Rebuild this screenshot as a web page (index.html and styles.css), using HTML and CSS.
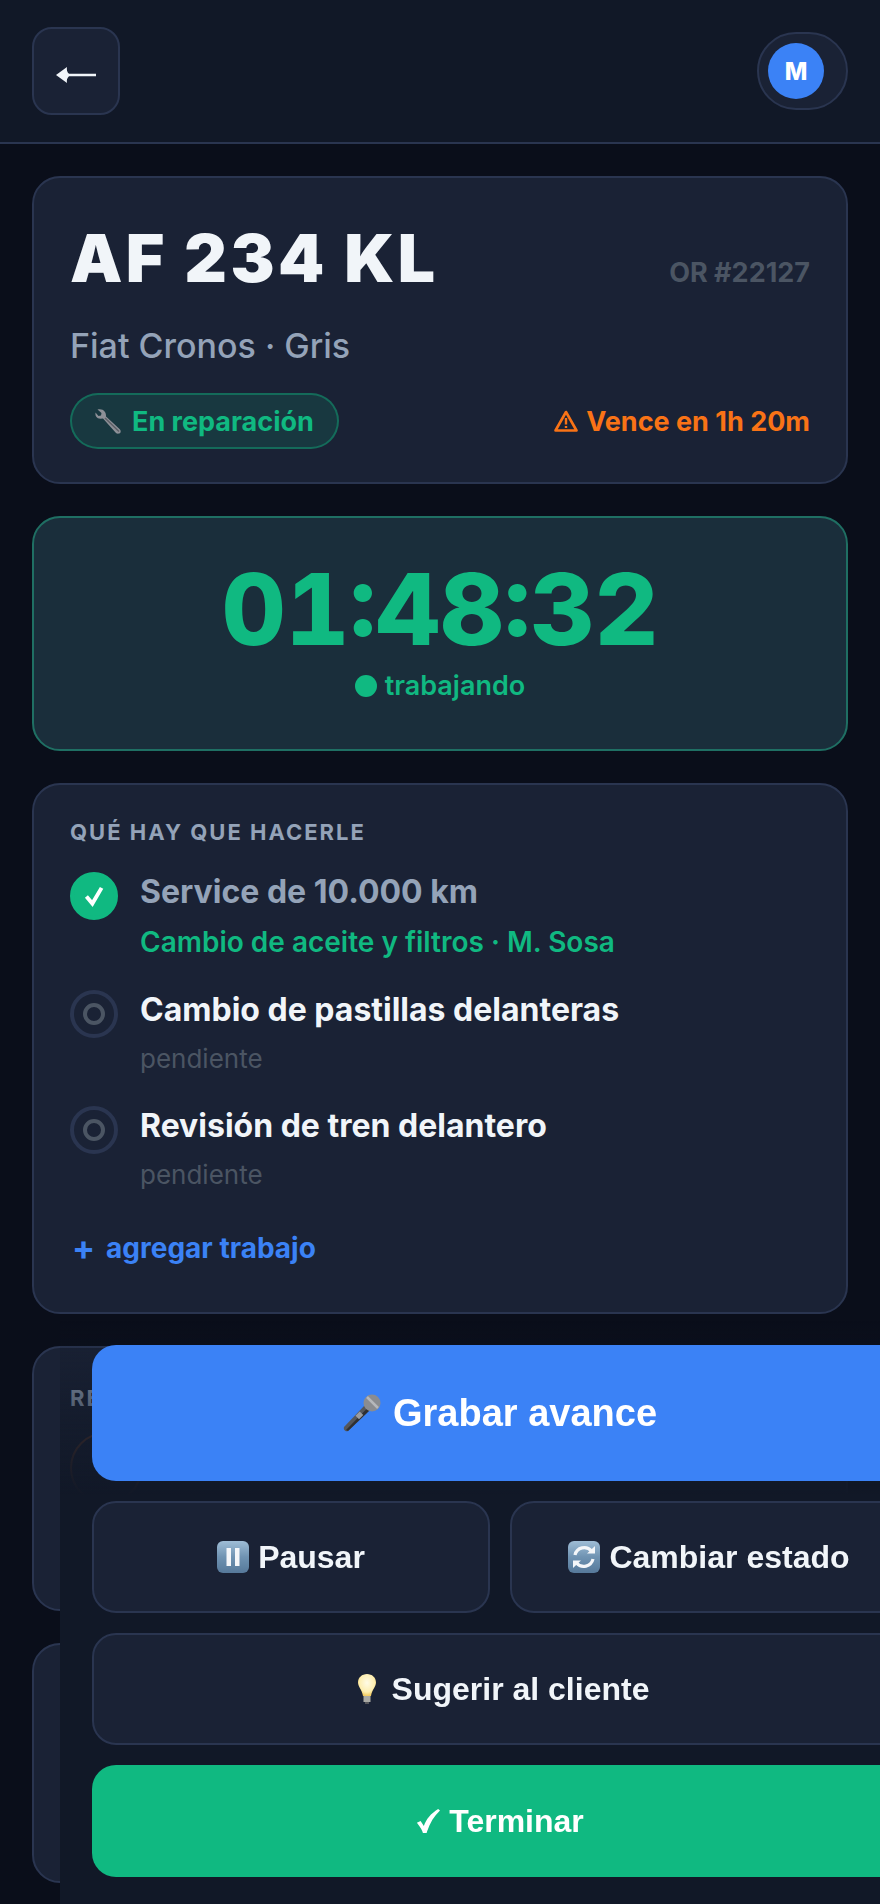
FILE: index.html
```html
<!DOCTYPE html>
<html lang="es">
<head>
<meta charset="utf-8">
<title>Orden de reparación</title>
<link rel="stylesheet" href="styles.css">
</head>
<body>
<header class="topbar">
  <button class="back" aria-label="Volver">
    <svg viewBox="0 0 40 16" width="40" height="16"><path d="M0 8L11 0C10.500 3 11 5 13 6.800H40V9.200H13C11 11 10.500 13 11 16Z" fill="#f1f5f9"/></svg>
  </button>
  <div class="user"><span class="avatar">M</span></div>
</header>
<main class="content">
  <section class="card vehicle">
    <div class="row baseline">
      <h1 class="plate">AF 234 KL</h1>
      <span class="order">OR #22127</span>
    </div>
    <p class="model">Fiat Cronos · Gris</p>
    <div class="row center">
      <span class="pill">
        <svg class="ico" viewBox="0 0 26 26" width="26" height="26"><path d="M2.500 1.500L6.500 5L6 7.500L3.500 8L0.500 4.500C0 8 1.500 10.500 5.500 10.800L8 10.500L21 25C22 26 24.500 26 25.500 24.500C26 23 25.500 22 24.500 21L11 8.500C11.500 4 8 0 2.500 1.500Z" fill="#8d9097"/><path d="M10 10L24 23.500" stroke="#5c5f66" stroke-width="1.500" fill="none"/></svg>
        En reparación
      </span>
      <span class="due">
        <svg class="ico" viewBox="0 0 24 22" width="24" height="22"><path d="M12 2L22.500 20.500H1.500Z" fill="none" stroke="#f97316" stroke-width="2.600" stroke-linejoin="round"/><path d="M12 8V14.500M12 16V18" stroke="#f97316" stroke-width="2.400" fill="none"/></svg>
        Vence en 1h 20m
      </span>
    </div>
  </section>
  <section class="card timer">
    <div class="clock">01:48:32</div>
    <div class="state"><span class="dot"></span>trabajando</div>
  </section>
  <section class="card tasks">
    <h2 class="label">QUÉ HAY QUE HACERLE</h2>
    <div class="task">
      <span class="mark done"><svg viewBox="0 0 24 24" width="26" height="26"><path d="M5 12.500L10.500 19L19 4.500" fill="none" stroke="#fff" stroke-width="3.600"/></svg></span>
      <div><div class="task-title muted">Service de 10.000 km</div><div class="task-sub green">Cambio de aceite y filtros · M. Sosa</div></div>
    </div>
    <div class="task">
      <span class="mark"><span class="ring"></span></span>
      <div><div class="task-title">Cambio de pastillas delanteras</div><div class="task-sub">pendiente</div></div>
    </div>
    <div class="task">
      <span class="mark"><span class="ring"></span></span>
      <div><div class="task-title">Revisión de tren delantero</div><div class="task-sub">pendiente</div></div>
    </div>
    <div class="add"><span class="plus">+</span>agregar trabajo</div>
  </section>
  <section class="card parts">
    <h2 class="label">REPUESTOS</h2>
    <span class="mark warn"></span>
  </section>
  <section class="card extra"></section>
</main>
<div class="actions">
  <button class="btn primary">
    <svg viewBox="0 0 38 38" width="38" height="38"><path d="M1 33L22 11L27 16L5 37C3 38 0 36 1 33Z" fill="#55575b"/><path d="M3 36L24.500 14L27 16L5 37Z" fill="#2f3033"/><circle cx="29" cy="9" r="8.500" fill="#8a8c90"/><path d="M24 3L35 14" stroke="#b5b7ba" stroke-width="2.500"/><rect x="13" y="19" width="6" height="5" transform="rotate(-45 16 21)" fill="#9a9ca0"/></svg>
    Grabar avance
  </button>
  <div class="pair">
    <button class="btn">
      <svg viewBox="0 0 32 32" width="32" height="32"><defs><linearGradient id="tile" x1="0" y1="0" x2="0" y2="1"><stop offset="0" stop-color="#9fbdd6"/><stop offset=".5" stop-color="#6f93b2"/><stop offset="1" stop-color="#56799a"/></linearGradient></defs><rect width="32" height="32" rx="6" fill="url(#tile)"/><rect x="9.500" y="7" width="4.500" height="18" fill="#f4f6f9"/><rect x="18" y="7" width="4.500" height="18" fill="#f4f6f9"/></svg>
      Pausar
    </button>
    <button class="btn">
      <svg viewBox="0 0 32 32" width="32" height="32"><rect width="32" height="32" rx="6" fill="url(#tile)"/><path d="M7 14A9.500 9.500 0 0 1 23.500 10" fill="none" stroke="#f4f6f9" stroke-width="3.200"/><path d="M19 12.500H27V5Z" fill="#f4f6f9"/><path d="M25 18A9.500 9.500 0 0 1 8.500 22" fill="none" stroke="#f4f6f9" stroke-width="3.200"/><path d="M13 19.500H5V27Z" fill="#f4f6f9"/></svg>
      Cambiar estado
    </button>
  </div>
  <button class="btn">
    <svg viewBox="-7 0 32 30" width="32" height="30"><defs><radialGradient id="glow" cx=".5" cy=".4" r=".6"><stop offset="0" stop-color="#fffbe6"/><stop offset=".7" stop-color="#fdeeb0"/><stop offset="1" stop-color="#f2c95c"/></radialGradient></defs><path d="M9 0C4 0 0 3.500 0 8.500C0 13 4 15.500 5 22H13C14 15.500 18 13 18 8.500C18 3.500 14 0 9 0Z" fill="url(#glow)"/><rect x="5.500" y="22" width="7" height="6" fill="#a9a9a4"/><rect x="7" y="28" width="4" height="2" fill="#55565a"/></svg>
    Sugerir al cliente
  </button>
  <button class="btn finish">
    <svg viewBox="0 0 26 26" width="24" height="26"><path d="M1 15L5 13L8.500 18.500C11 11 16 5 24 0L26 1.500C19 8 14.500 16 11.500 26H7.500C6.500 22 3.500 18.500 1 15Z" fill="#fff"/></svg>
    Terminar
  </button>
</div>
</body>
</html>
```
FILE: styles.css
```css
* { box-sizing: border-box; }
html, body { margin: 0; height: 1904px; overflow: hidden; }
body { background: #0a0e1a; color: #f1f5f9; font-family: Inter, "Liberation Sans", sans-serif; }
h1, h2, p { margin: 0; }
button { font-family: "Liberation Sans", Arial, sans-serif; }

.topbar { height: 144px; padding: 0 32px; display: flex; justify-content: space-between; align-items: center; background: #111827; border-bottom: 2px solid #2a3550; }
.back { width: 88px; height: 88px; border-radius: 20px; border: 2px solid #2a3550; background: #1a2235; padding: 8px 0 0; display: flex; align-items: center; justify-content: center; }
.user { width: 91px; height: 78px; padding: 9px 0 0 9px; border-radius: 39px; border: 2px solid #2a3550; background: #1a2235; }
.avatar { display: flex; width: 56px; height: 56px; border-radius: 50%; background: #3b82f6; color: #fff; font-size: 24px; font-weight: 800; align-items: center; justify-content: center; }

.content { padding: 32px; display: flex; flex-direction: column; gap: 32px; }
.card { background: #1a2235; border: 2px solid #2a3550; border-radius: 28px; padding: 36px; flex: none; }
.row { display: flex; justify-content: space-between; }
.baseline { align-items: baseline; }
.center { align-items: center; }
.ico { flex: none; }

.vehicle { height: 308px; padding-top: 40px; }
.plate { font-size: 66px; line-height: 80px; font-weight: 900; letter-spacing: 3.4px; color: #f1f5f9; }
.order { font-size: 27px; font-weight: 700; color: #4b5563; }
.model { font-size: 34px; font-weight: 500; color: #94a3b8; margin: 28px 0 27px; line-height: 40px; }
.pill { height: 56px; padding: 0 23px; display: inline-flex; align-items: center; gap: 11px; border-radius: 28px; border: 2px solid rgba(16,185,129,.4); background: rgba(16,185,129,.15); color: #10b981; font-size: 27px; font-weight: 700; }
.due { color: #f97316; font-size: 27px; font-weight: 700; display: flex; align-items: center; gap: 8px; }

.timer { height: 235px; padding-top: 36px; text-align: center; background: #1a2e3b; border-color: #1f6f63; }
.clock { font-size: 99px; line-height: 110px; font-weight: 800; color: #10b981; font-variant-numeric: tabular-nums; }
.state { margin-top: 5px; display: flex; justify-content: center; align-items: center; gap: 8px; font-size: 27px; font-weight: 600; color: #10b981; }
.dot { width: 22px; height: 22px; border-radius: 50%; background: #10b981; }

.tasks { height: 531px; padding-top: 33px; }
.label { font-size: 22px; line-height: 28px; font-weight: 700; letter-spacing: 2px; color: #94a3b8; }
.tasks .label { margin-bottom: 25px; }
.task { display: flex; gap: 22px; margin-bottom: 29px; }
.mark { flex: none; width: 48px; height: 48px; margin-top: 1px; border-radius: 50%; border: 4px solid #2a3550; display: flex; align-items: center; justify-content: center; }
.mark.done { background: #10b981; border-color: #10b981; }
.ring { width: 22px; height: 22px; border-radius: 50%; border: 4px solid #4b5563; }
.task-title { font-size: 32px; line-height: 42px; font-weight: 700; color: #f1f5f9; }
.task-title.muted { color: #94a3b8; }
.task-sub { font-size: 26px; line-height: 34px; margin-top: 11px; color: #4b5563; }
.task-sub.green { font-size: 28px; line-height: 36px; color: #10b981; font-weight: 600; }
.add { display: flex; align-items: center; gap: 11px; color: #3b82f6; font-size: 28px; font-weight: 700; line-height: 36px; margin-top: 38px; }
.plus { font-size: 34px; margin-left: 2px; }

.parts { height: 265px; }
.warn { display: block; margin-top: 20px; width: 72px; height: 72px; border: 2px solid rgba(249,115,22,.3); }
.extra { height: 240px; }

.actions { position: fixed; left: 60px; bottom: 0; width: 880px; padding: 24px 32px 27px; display: flex; flex-direction: column; gap: 20px; background: linear-gradient(to bottom, rgba(17,24,39,0), #111827 30%); }
.pair { display: flex; gap: 20px; }
.pair .btn { flex: 1; }
.btn { height: 112px; border-radius: 24px; border: 2px solid #2a3550; background: #1a2235; color: #f1f5f9; font-size: 32px; font-weight: 700; padding: 0; display: flex; align-items: center; justify-content: center; gap: 9px; }
.primary { height: 136px; background: #3b82f6; border: 0; color: #fff; font-size: 38px; gap: 12px; }
.finish { background: #10b981; border: 0; color: #fff; }
```
